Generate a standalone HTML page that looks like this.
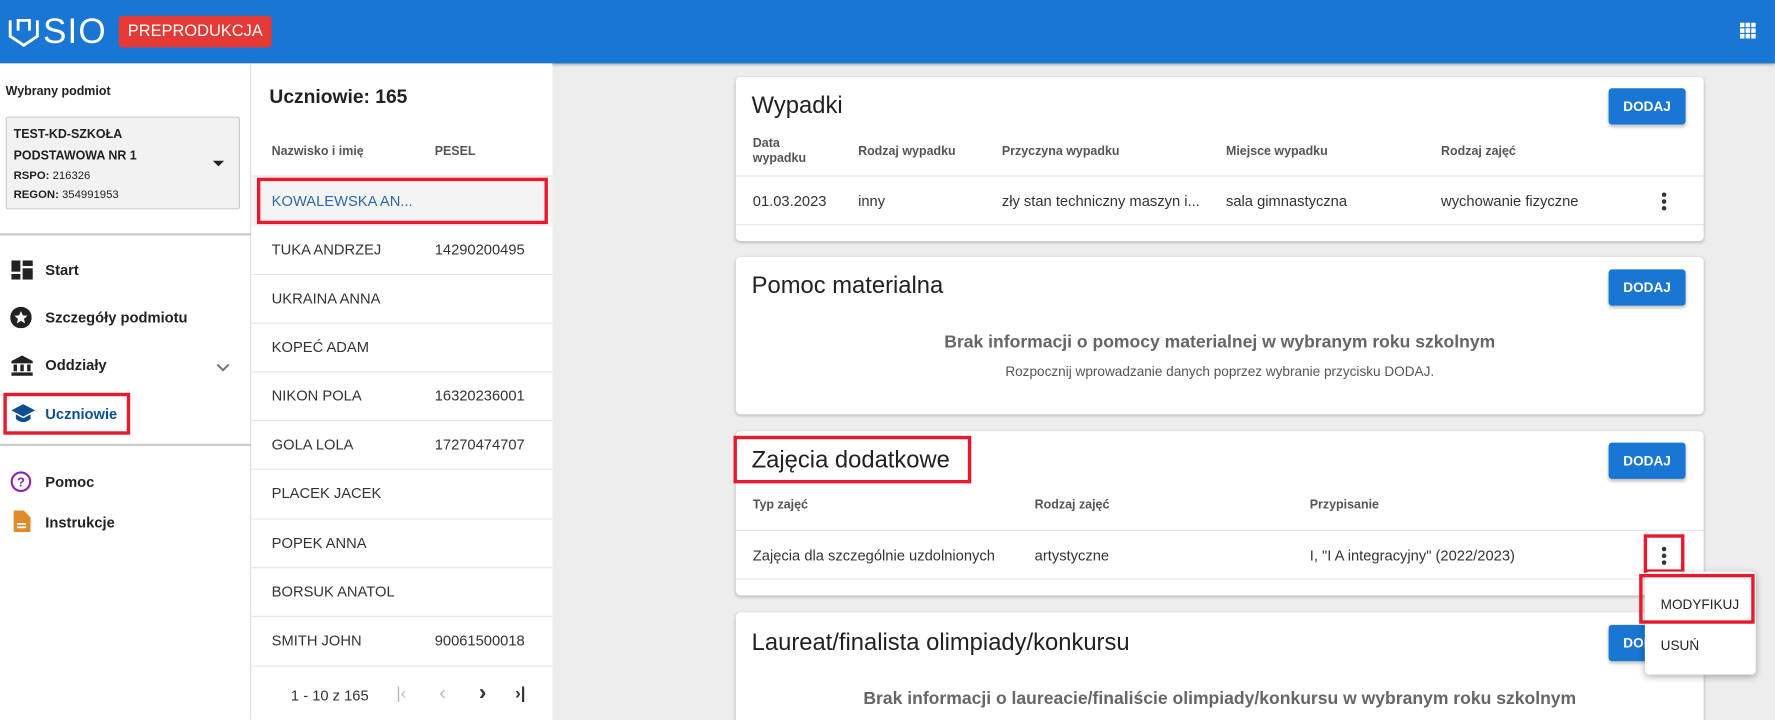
<!DOCTYPE html>
<html><head><meta charset="utf-8"><style>
*{box-sizing:border-box;margin:0;padding:0}
html,body{width:1775px;height:720px;overflow:hidden;background:#ededed}
#clip{position:absolute;left:0;top:0;width:1775px;height:720px;overflow:hidden}
#w{position:absolute;left:0;top:0;width:1568px;height:636px;overflow:hidden;transform:scale(1.13202);transform-origin:0 0;font-family:"Liberation Sans",Arial,sans-serif;color:#212121;background:#ededed}
.a{position:absolute;white-space:nowrap}
.hdr{left:0;top:0;width:1568px;height:56px;background:#1976d2;box-shadow:0 1px 3px rgba(0,0,0,.4)}
.side{left:0;top:56px;width:222px;height:580px;background:#fff;border-right:1px solid #ddd}
.list{left:222px;top:56px;width:266px;height:580px;background:#fff}
.card{left:650px;width:855px;background:#fff;border-radius:4px;box-shadow:0 1px 3px rgba(0,0,0,.25)}
.btn{width:68px;height:32px;background:#1976d2;color:#fff;font-weight:bold;font-size:12px;text-align:center;line-height:32px;border-radius:3px;box-shadow:0 2px 3px rgba(0,0,0,.25)}
.title{font-size:21px;color:#212121}
.th{font-size:11px;font-weight:bold;color:#555}
.td{font-size:13px;color:#333}
.hl{height:1px;background:#e5e5e5}
.red{border:3px solid #e8192c}
.mi{font-size:13px;font-weight:bold;color:#222}
.row{font-size:13px;color:#333}
.dots{width:4px}
.dots i{display:block;width:4px;height:4px;border-radius:2px;background:#333;margin-bottom:2px}
</style></head><body><div id="clip"><div id="w">
<div class="a hdr"></div>
<svg class="a" style="left:7px;top:14px" width="28" height="28" viewBox="0 0 28 28"><path d="M2 4v14l12 8 12-8V4" fill="none" stroke="#fff" stroke-width="2.5"/><path d="M9 13V4h10v9" fill="none" stroke="#fff" stroke-width="2.5"/></svg>
<div class="a" style="left:38px;top:10px;font-size:31px;color:#fff;letter-spacing:1px">SIO</div>
<div class="a" style="left:105px;top:14px;width:135px;height:28px;background:#e53935;border-radius:3px;color:#fff;font-size:14.5px;line-height:28px;text-align:center">PREPRODUKCJA</div>
<svg class="a" style="left:1537px;top:20px" width="14" height="14" viewBox="0 0 14 14" fill="#fff"><rect x="0" y="0" width="4" height="4"/><rect x="5" y="0" width="4" height="4"/><rect x="10" y="0" width="4" height="4"/><rect x="0" y="5" width="4" height="4"/><rect x="5" y="5" width="4" height="4"/><rect x="10" y="5" width="4" height="4"/><rect x="0" y="10" width="4" height="4"/><rect x="5" y="10" width="4" height="4"/><rect x="10" y="10" width="4" height="4"/></svg>

<div class="a side"></div>
<div class="a" style="left:5px;top:75px;font-size:11px;font-weight:bold">Wybrany podmiot</div>
<div class="a" style="left:5px;top:103px;width:207px;height:82px;background:#f2f2f2;border:1px solid #ccc;border-radius:2px"></div>
<div class="a" style="left:12px;top:110px;font-size:11px;font-weight:bold;line-height:19px">TEST-KD-SZKOŁA<br>PODSTAWOWA NR 1</div>
<div class="a" style="left:12px;top:147px;font-size:10px;line-height:17px"><b>RSPO:</b> 216326<br><b>REGON:</b> 354991953</div>
<div class="a" style="left:188px;top:142px;width:0;height:0;border-left:5px solid transparent;border-right:5px solid transparent;border-top:5px solid #222"></div>
<div class="a" style="left:0;top:206px;width:222px;height:2px;background:#ccc"></div>
<svg class="a" style="left:10px;top:230px" width="19" height="17" viewBox="0 0 19 17" fill="#222"><rect x="0" y="0" width="8" height="10"/><rect x="10" y="0" width="9" height="5"/><rect x="0" y="12" width="8" height="5"/><rect x="10" y="7" width="9" height="10"/></svg>
<div class="a mi" style="left:40px;top:231px">Start</div>
<svg class="a" style="left:9px;top:271px" width="19" height="19" viewBox="0 0 20 20"><circle cx="10" cy="10" r="10" fill="#222"/><path d="M10 4l1.8 4 4.2.4-3.2 2.8 1 4.2-3.8-2.3-3.8 2.3 1-4.2L4 8.4l4.2-.4z" fill="#fff"/></svg>
<div class="a mi" style="left:40px;top:273px">Szczegóły podmiotu</div>
<svg class="a" style="left:10px;top:314px" width="19" height="18" viewBox="0 0 19 18" fill="#222"><path d="M9.5 0L0 5v2h19V5z"/><rect x="2" y="8" width="3" height="6"/><rect x="8" y="8" width="3" height="6"/><rect x="14" y="8" width="3" height="6"/><rect x="0" y="15" width="19" height="3"/></svg>
<div class="a mi" style="left:40px;top:315px">Oddziały</div>
<svg class="a" style="left:191px;top:321px" width="12" height="8" viewBox="0 0 12 8"><path d="M1 1l5 5 5-5" fill="none" stroke="#777" stroke-width="1.8"/></svg>
<svg class="a" style="left:10px;top:357px" width="21" height="16" viewBox="0 0 21 16" fill="#0d4f91"><path d="M10.5 0L0 5.5l10.5 5.5L21 5.5z"/><path d="M4 9v4c2 2 4.5 3 6.5 3s4.5-1 6.5-3V9l-6.5 3.5z"/></svg>
<div class="a mi" style="left:40px;top:358px;color:#0d4f91">Uczniowie</div>
<div class="a red" style="left:3px;top:347px;width:112px;height:37px"></div>
<div class="a" style="left:0;top:392px;width:222px;height:2px;background:#ccc"></div>
<svg class="a" style="left:9px;top:416px" width="19" height="19" viewBox="0 0 20 20"><circle cx="10" cy="10" r="8.6" fill="none" stroke="#8e24aa" stroke-width="2"/><text x="10" y="14.5" text-anchor="middle" font-size="12" font-weight="bold" fill="#8e24aa" font-family="Liberation Sans">?</text></svg>
<div class="a mi" style="left:40px;top:418px">Pomoc</div>
<svg class="a" style="left:12px;top:451px" width="15" height="19" viewBox="0 0 15 19"><path d="M0 1a1 1 0 011-1h8l6 6v12a1 1 0 01-1 1H1a1 1 0 01-1-1z" fill="#e08a2a"/><rect x="3" y="11" width="8" height="1.6" fill="#fff"/><rect x="3" y="14" width="8" height="1.6" fill="#fff"/></svg>
<div class="a mi" style="left:40px;top:454px">Instrukcje</div>

<div class="a list"></div>
<div class="a" style="left:238px;top:76px;font-size:17px;font-weight:bold">Uczniowie: 165</div>
<div class="a th" style="left:240px;top:128px">Nazwisko i imię</div>
<div class="a th" style="left:384px;top:128px">PESEL</div>
<div class="a" style="left:222px;top:155px;width:266px;height:45px;background:#f4f4f4;border-top:1px solid #e5e5e5"></div>
<div class="a row" style="left:240px;top:170px;color:#2a6aa8">KOWALEWSKA AN...</div>
<div class="a red" style="left:227px;top:157px;width:257px;height:41px"></div>
<div class="a" style="left:222px;top:200px;width:266px">
<div style="height:43px;border-bottom:1px solid #e5e5e5;position:relative"><span class="a row" style="left:18px;top:13px">TUKA ANDRZEJ</span><span class="a row" style="left:162px;top:13px">14290200495</span></div>
<div style="height:43px;border-bottom:1px solid #e5e5e5;position:relative"><span class="a row" style="left:18px;top:13px">UKRAINA ANNA</span></div>
<div style="height:43px;border-bottom:1px solid #e5e5e5;position:relative"><span class="a row" style="left:18px;top:13px">KOPEĆ ADAM</span></div>
<div style="height:43px;border-bottom:1px solid #e5e5e5;position:relative"><span class="a row" style="left:18px;top:13px">NIKON POLA</span><span class="a row" style="left:162px;top:13px">16320236001</span></div>
<div style="height:43px;border-bottom:1px solid #e5e5e5;position:relative"><span class="a row" style="left:18px;top:13px">GOLA LOLA</span><span class="a row" style="left:162px;top:13px">17270474707</span></div>
<div style="height:44px;border-bottom:1px solid #e5e5e5;position:relative"><span class="a row" style="left:18px;top:13px">PLACEK JACEK</span></div>
<div style="height:43px;border-bottom:1px solid #e5e5e5;position:relative"><span class="a row" style="left:18px;top:13px">POPEK ANNA</span></div>
<div style="height:43px;border-bottom:1px solid #e5e5e5;position:relative"><span class="a row" style="left:18px;top:13px">BORSUK ANATOL</span></div>
<div style="height:44px;border-bottom:1px solid #e5e5e5;position:relative"><span class="a row" style="left:18px;top:13px">SMITH JOHN</span><span class="a row" style="left:162px;top:13px">90061500018</span></div>
</div>
<div class="a row" style="left:257px;top:607px">1 - 10 z 165</div>
<div class="a" style="left:350px;top:604px;font-size:15px;color:#bbb">|&lsaquo;</div>
<div class="a" style="left:388px;top:602px;font-size:18px;color:#bbb">&lsaquo;</div>
<div class="a" style="left:423px;top:601px;font-size:20px;color:#333;font-weight:bold">&rsaquo;</div>
<div class="a" style="left:455px;top:604px;font-size:15px;color:#333;font-weight:bold">&rsaquo;|</div>

<div class="a card" style="top:68px;height:145px"></div>
<div class="a title" style="left:664px;top:82px">Wypadki</div>
<div class="a btn" style="left:1421px;top:78px">DODAJ</div>
<div class="a th" style="left:665px;top:121px;line-height:13px">Data<br>wypadku</div>
<div class="a th" style="left:758px;top:128px">Rodzaj wypadku</div>
<div class="a th" style="left:885px;top:128px">Przyczyna wypadku</div>
<div class="a th" style="left:1083px;top:128px">Miejsce wypadku</div>
<div class="a th" style="left:1273px;top:128px">Rodzaj zajęć</div>
<div class="a hl" style="left:650px;top:155px;width:855px"></div>
<div class="a td" style="left:665px;top:170px">01.03.2023</div>
<div class="a td" style="left:758px;top:170px">inny</div>
<div class="a td" style="left:885px;top:170px">zły stan techniczny maszyn i...</div>
<div class="a td" style="left:1083px;top:170px">sala gimnastyczna</div>
<div class="a td" style="left:1273px;top:170px">wychowanie fizyczne</div>
<div class="a dots" style="left:1468px;top:170px"><i></i><i></i><i></i></div>
<div class="a hl" style="left:650px;top:198px;width:855px"></div>

<div class="a card" style="top:227px;height:139px"></div>
<div class="a title" style="left:664px;top:241px">Pomoc materialna</div>
<div class="a btn" style="left:1421px;top:238px">DODAJ</div>
<div class="a" style="left:650px;top:294px;width:855px;text-align:center;font-size:15.5px;font-weight:bold;color:#666">Brak informacji o pomocy materialnej w wybranym roku szkolnym</div>
<div class="a" style="left:650px;top:321px;width:855px;text-align:center;font-size:12px;color:#555">Rozpocznij wprowadzanie danych poprzez wybranie przycisku DODAJ.</div>

<div class="a card" style="top:381px;height:145px"></div>
<div class="a title" style="left:664px;top:395px">Zajęcia dodatkowe</div>
<div class="a red" style="left:648px;top:385px;width:210px;height:42px"></div>
<div class="a btn" style="left:1421px;top:391px">DODAJ</div>
<div class="a th" style="left:665px;top:440px">Typ zajęć</div>
<div class="a th" style="left:914px;top:440px">Rodzaj zajęć</div>
<div class="a th" style="left:1157px;top:440px">Przypisanie</div>
<div class="a hl" style="left:650px;top:468px;width:855px"></div>
<div class="a td" style="left:665px;top:483px">Zajęcia dla szczególnie uzdolnionych</div>
<div class="a td" style="left:914px;top:483px">artystyczne</div>
<div class="a td" style="left:1157px;top:483px">I, "I A integracyjny" (2022/2023)</div>
<div class="a dots" style="left:1468px;top:483px"><i></i><i></i><i></i></div>
<div class="a red" style="left:1452px;top:472px;width:36px;height:34px"></div>
<div class="a hl" style="left:650px;top:511px;width:855px"></div>

<div class="a card" style="top:541px;height:120px"></div>
<div class="a title" style="left:664px;top:556px">Laureat/finalista olimpiady/konkursu</div>
<div class="a btn" style="left:1421px;top:552px">DODAJ</div>
<div class="a" style="left:650px;top:609px;width:855px;text-align:center;font-size:15.5px;font-weight:bold;color:#666">Brak informacji o laureacie/finaliście olimpiady/konkursu w wybranym roku szkolnym</div>

<div class="a" style="left:1453px;top:505px;width:98px;height:91px;background:#fff;border-radius:4px;box-shadow:0 2px 6px rgba(0,0,0,.3)"></div>
<div class="a" style="left:1467px;top:527px;font-size:12px;color:#222">MODYFIKUJ</div>
<div class="a red" style="left:1448px;top:507px;width:102px;height:44px"></div>
<div class="a" style="left:1467px;top:563px;font-size:12px;color:#222">USUŃ</div>
</div></div></body></html>
